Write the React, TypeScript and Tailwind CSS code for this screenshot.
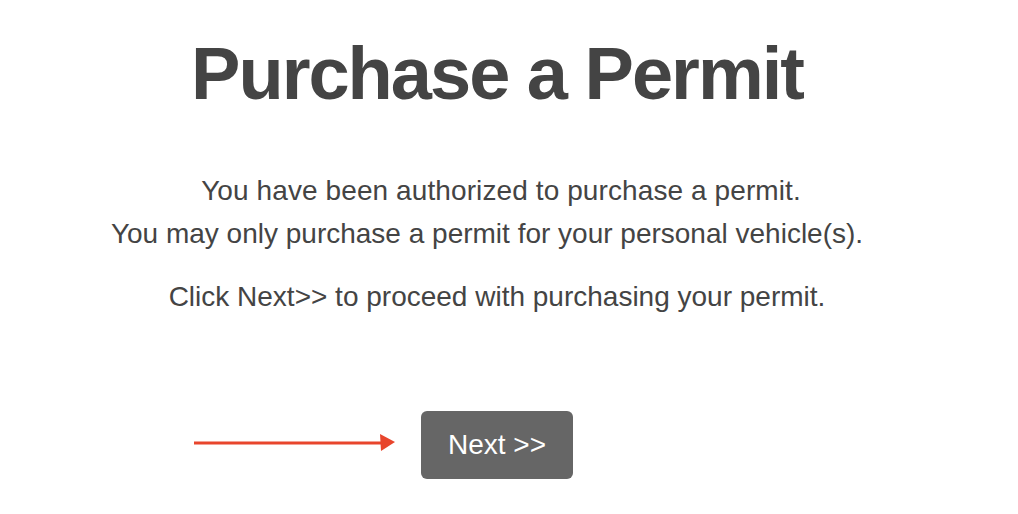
export default function App() {
  return (
    <main className="w-[1018px] h-[514px] bg-white text-[#444] font-['Liberation_Sans',Arial,sans-serif] overflow-hidden">
      <div className="flex flex-col items-center pr-[24px]">
        <h1 className="mt-[31px] text-[74px] leading-[86px] font-bold tracking-[-2px] text-[#444]">
          Purchase a Permit
        </h1>
        <div className="mt-[52px] text-center text-[28px] leading-[43px]">
          <p className="pl-[8px] tracking-[0.1px]">You have been authorized to purchase a permit.</p>
          <p className="pr-[20px]">You may only purchase a permit for your personal vehicle(s).</p>
          <p className="mt-[20px]">Click Next&gt;&gt; to proceed with purchasing your permit.</p>
        </div>
        <div className="mt-[93px] flex items-center">
          <svg width="202" height="24" viewBox="0 0 202 24" className="mr-[25px] ml-[-227px] mb-[4px]">
            <path d="M0 12 H188" stroke="#e8452c" strokeWidth="3" strokeLinecap="round" />
            <path d="M186 3 L201 11 L187 20 Z" fill="#e8452c" />
          </svg>
          <button className="w-[152px] h-[68px] rounded-[6px] bg-[#666] text-white text-[28px]">
            Next &gt;&gt;
          </button>
        </div>
      </div>
    </main>
  );
}
